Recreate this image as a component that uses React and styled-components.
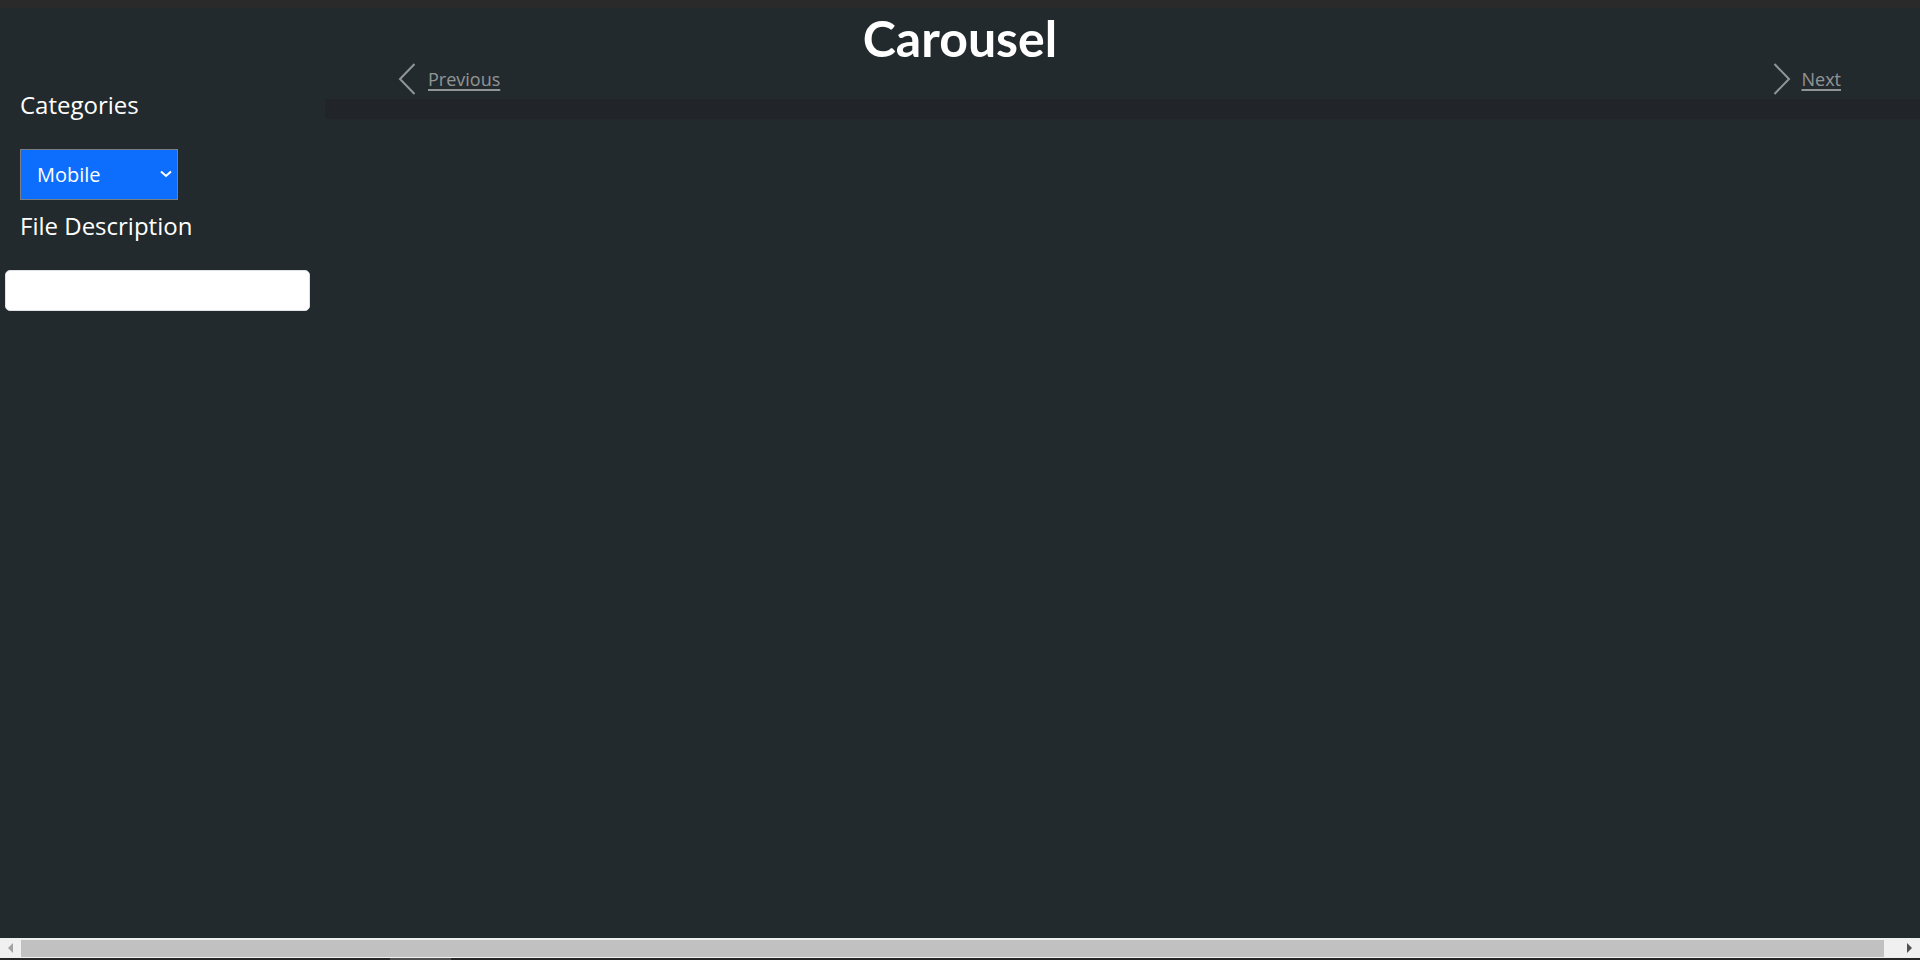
import React from "react";
import styled, { createGlobalStyle } from "styled-components";

const GlobalStyle = createGlobalStyle`
  html, body {
    margin: 0;
    padding: 0;
    height: 100%;
    overflow: hidden;
    background: #2a2a2a;
  }
  #root { height: 100%; }
  * { box-sizing: border-box; }
`;

const Frame = styled.div`
  display: flex;
  flex-direction: column;
  height: 100vh;
  font-family: "Open Sans", "Noto Sans", sans-serif;
  color: #ffffff;
`;

const TopStrip = styled.div`
  height: 8px;
  flex: none;
  background: #2a2a2a;
`;

const Viewport = styled.div`
  flex: 1;
  min-height: 0;
  overflow: hidden;
  background: #232a2d;
`;

const Title = styled.h1`
  margin: 0 0 -6px;
  font-family: Lato, "Open Sans", sans-serif;
  font-size: 50px;
  line-height: 61px;
  font-weight: 700;
  text-align: center;
  color: #ffffff;
`;

const Columns = styled.div`
  display: flex;
  align-items: flex-start;
`;

const Sidebar = styled.aside`
  width: 325px;
  flex: none;
  display: flex;
  flex-direction: column;
  align-items: flex-start;
  padding-left: 5px;
`;

const FieldLabel = styled.label`
  display: block;
  margin: ${(p) => (p.$first ? "24px" : "8px")} 0 26px 15px;
  font-size: 24px;
  line-height: 36px;
  font-weight: 400;
  color: #ffffff;
`;

const SelectWrap = styled.div`
  position: relative;
  margin-left: 15px;
  width: 158px;
  height: 51px;
`;

const Select = styled.select`
  appearance: none;
  -webkit-appearance: none;
  width: 100%;
  height: 100%;
  margin: 0;
  padding: 0 30px 0 16px;
  border: 1px solid #7b7f83;
  border-radius: 0;
  background: #0d6efd;
  color: #ffffff;
  font-family: "Open Sans", "Noto Sans", sans-serif;
  font-size: 20px;
  outline: none;
`;

const SelectChevron = styled.svg`
  position: absolute;
  left: 140px;
  top: 21px;
  pointer-events: none;
`;

const TextInput = styled.input`
  width: 305px;
  height: 41px;
  margin: 0;
  padding: 6px 12px;
  border: 1px solid #dee2e6;
  border-radius: 5px;
  background: #ffffff;
  font-family: "Open Sans", "Noto Sans", sans-serif;
  font-size: 16px;
  outline: none;
`;

const Main = styled.main`
  flex: 1;
  min-width: 0;
  display: flex;
  flex-direction: column;
  gap: 4px;
`;

const Controls = styled.div`
  height: 32px;
  display: flex;
  justify-content: space-between;
  align-items: center;
  padding: 0 79px 0 73px;
`;

const ControlLink = styled.a`
  display: flex;
  align-items: center;
  gap: ${(p) => (p.$next ? "11px" : "12px")};
  color: rgba(255, 255, 255, 0.5);
  font-size: 18px;
  line-height: 26px;
  cursor: pointer;

  span {
    text-decoration: underline;
    text-decoration-thickness: 2px;
    text-underline-offset: 3px;
  }
`;

const Band = styled.div`
  height: 20px;
  background: #212428;
`;

const Scrollbar = styled.div`
  height: 20px;
  flex: none;
  display: flex;
  background: #f0f0f0;
`;

const ScrollButton = styled.div`
  width: 21px;
  flex: none;
  display: flex;
  align-items: center;
  justify-content: center;

  &::before {
    content: "";
    width: 0;
    height: 0;
    border-top: 5px solid transparent;
    border-bottom: 5px solid transparent;
    ${(p) =>
      p.$dir === "left"
        ? "border-right: 5px solid #a3a3a3;"
        : "border-left: 5px solid #505050;"}
  }
`;

const ScrollTrack = styled.div`
  flex: 1;
  display: flex;
  padding: 2px 15px 1px 0;
`;

const ScrollThumb = styled.div`
  flex: 1;
  background: #c1c1c1;
`;

const BottomStrip = styled.div`
  height: 2px;
  flex: none;
  display: flex;
  background: #262626;
`;

const BottomSegment = styled.div`
  margin-left: 390px;
  width: 61px;
  background: #4f4f4f;
`;

const Chevron = ({ dir }) => (
  <svg width="18" height="32" viewBox="0 0 18 32" fill="none">
    <path
      d={dir === "left" ? "M16.5 1 L2 16 L16.5 31" : "M1.5 1 L16 16 L1.5 31"}
      stroke="rgba(255,255,255,0.5)"
      strokeWidth="2"
    />
  </svg>
);

export default function App() {
  return (
    <>
      <GlobalStyle />
      <Frame>
        <TopStrip />
        <Viewport>
          <Title>Carousel</Title>
          <Columns>
            <Sidebar>
              <FieldLabel $first htmlFor="category">
                Categories
              </FieldLabel>
              <SelectWrap>
                <Select id="category" defaultValue="Mobile">
                  <option>Mobile</option>
                  <option>Desktop</option>
                  <option>Tablet</option>
                </Select>
                <SelectChevron width="12" height="8" viewBox="0 0 12 8" fill="none">
                  <path d="M1 1.5 L6 6 L11 1.5" stroke="#ffffff" strokeWidth="2" />
                </SelectChevron>
              </SelectWrap>
              <FieldLabel htmlFor="desc">File Description</FieldLabel>
              <TextInput id="desc" type="text" />
            </Sidebar>
            <Main>
              <Controls>
                <ControlLink>
                  <Chevron dir="left" />
                  <span>Previous</span>
                </ControlLink>
                <ControlLink $next>
                  <Chevron dir="right" />
                  <span>Next</span>
                </ControlLink>
              </Controls>
              <Band />
            </Main>
          </Columns>
        </Viewport>
        <Scrollbar>
          <ScrollButton $dir="left" />
          <ScrollTrack>
            <ScrollThumb />
          </ScrollTrack>
          <ScrollButton $dir="right" />
        </Scrollbar>
        <BottomStrip>
          <BottomSegment />
        </BottomStrip>
      </Frame>
    </>
  );
}
